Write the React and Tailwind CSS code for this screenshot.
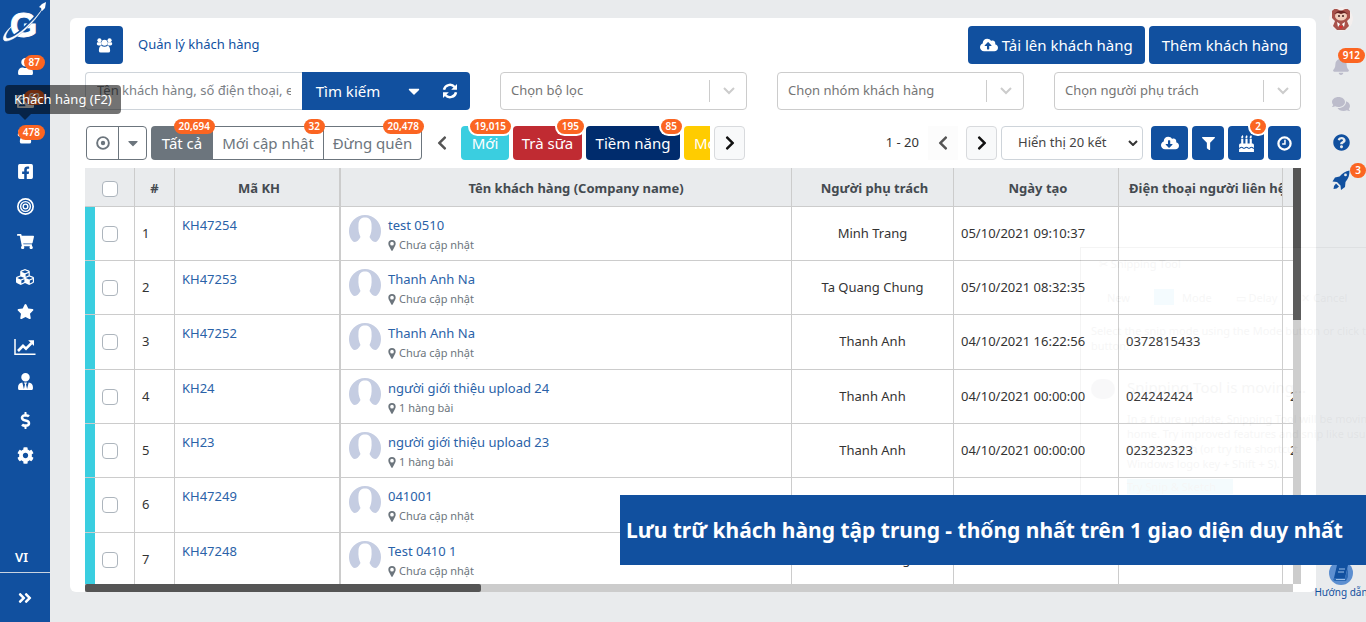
import {
  FaAngleDoubleRight,
  FaBell,
  FaBirthdayCake,
  FaCaretDown,
  FaChevronLeft,
  FaChevronRight,
  FaCloudDownloadAlt,
  FaCloudUploadAlt,
  FaCog,
  FaComments,
  FaCubes,
  FaDollarSign,
  FaFacebookSquare,
  FaFilter,
  FaIdCard,
  FaQuestionCircle,
  FaShoppingCart,
  FaStar,
  FaUser,
  FaUserTie,
} from "react-icons/fa";
import clsx from "clsx";

const customers = [
  { code: "KH47254", name: "test 0510", address: "Chưa cập nhật", owner: "Minh Trang", created: "05/10/2021 09:10:37", phone: "", extra: "" },
  { code: "KH47253", name: "Thanh Anh Na", address: "Chưa cập nhật", owner: "Ta Quang Chung", created: "05/10/2021 08:32:35", phone: "", extra: "" },
  { code: "KH47252", name: "Thanh Anh Na", address: "Chưa cập nhật", owner: "Thanh Anh", created: "04/10/2021 16:22:56", phone: "0372815433", extra: "" },
  { code: "KH24", name: "người giới thiệu upload 24", address: "1 hàng bài", owner: "Thanh Anh", created: "04/10/2021 00:00:00", phone: "024242424", extra: "24" },
  { code: "KH23", name: "người giới thiệu upload 23", address: "1 hàng bài", owner: "Thanh Anh", created: "04/10/2021 00:00:00", phone: "023232323", extra: "23" },
  { code: "KH47249", name: "041001", address: "Chưa cập nhật", owner: "Thanh Anh", created: "04/10/2021 00:00:00", phone: "", extra: "" },
  { code: "KH47248", name: "Test 0410 1", address: "Chưa cập nhật", owner: "Thu Phương", created: "04/10/2021 00:00:00", phone: "", extra: "" },
];

const menu = [
  { label: "Liên hệ", icon: FaUser, badge: "87" },
  { label: "Cơ hội", icon: FaIdCard, badge: "62" },
  { label: "Khách hàng", icon: UsersIcon, badge: "478" },
  { label: "Facebook", icon: FaFacebookSquare },
  { label: "Chiến dịch", icon: TargetIcon },
  { label: "Đơn hàng", icon: FaShoppingCart },
  { label: "Sản phẩm", icon: FaCubes, large: true },
  { label: "Đánh giá", icon: FaStar },
  { label: "Báo cáo", icon: LineChartIcon, large: true },
  { label: "Nhân sự", icon: FaUserTie },
];

const settingsMenu = [
  { label: "Tài chính", icon: FaDollarSign },
  { label: "Cài đặt", icon: FaCog },
];

function UsersIcon(props) {
  return (
    <svg viewBox="0 0 18 16" fill="currentColor" {...props}>
      <circle cx="3.600" cy="2.500" r="2.200" />
      <circle cx="14.400" cy="2.500" r="2.200" />
      <path d="M1.600 4.500H6L5.800 8H2.600Q0.800 8 0.800 6.500Q0.800 4.500 1.600 4.500Z" />
      <path d="M16.400 4.500H12L12.200 8H15.400Q17.200 8 17.200 6.500Q17.200 4.500 16.400 4.500Z" />
      <circle cx="9" cy="5" r="3.200" />
      <path d="M5.500 8.200Q9 10.200 12.500 8.200Q15 9 15 13.500Q15 15.500 13 15.500H5Q3 15.500 3 13.500Q3 9 5.500 8.200Z" />
    </svg>
  );
}

function TargetIcon(props) {
  return (
    <svg viewBox="0 0 16 16" fill="none" stroke="currentColor" {...props}>
      <circle cx="8" cy="8" r="7.2" strokeWidth="1.6" />
      <circle cx="8" cy="8" r="4.6" strokeWidth="1.3" />
      <circle cx="8" cy="8" r="2.2" strokeWidth="1.3" />
    </svg>
  );
}

function LineChartIcon(props) {
  return (
    <svg viewBox="0 0 22 17" fill="none" stroke="currentColor" {...props}>
      <path d="M1 0.5V15.7H21.5" strokeWidth="1.5" />
      <path d="M4 12.5L9 7.3L12 10.2L17.5 4.6" strokeWidth="2.6" />
      <path d="M14.2 1.8H20V7.6Z" fill="currentColor" stroke="none" />
    </svg>
  );
}

function RefreshIcon(props) {
  return (
    <svg viewBox="0 0 16 16" fill="none" stroke="currentColor" {...props}>
      <path d="M2 6.8A6.1 6.1 0 0 1 12.6 4" strokeWidth="2.5" />
      <path d="M14 9.2A6.1 6.1 0 0 1 3.4 12" strokeWidth="2.5" />
      <path d="M15 1V6.8H9.2Z" fill="currentColor" stroke="none" />
      <path d="M1 15V9.2H6.8Z" fill="currentColor" stroke="none" />
    </svg>
  );
}

function DotCircleIcon(props) {
  return (
    <svg viewBox="0 0 16 16" fill="none" stroke="currentColor" {...props}>
      <circle cx="8" cy="8" r="6.7" strokeWidth="2.2" />
      <circle cx="8" cy="8" r="2.5" fill="currentColor" stroke="none" />
    </svg>
  );
}

function ClockIcon(props) {
  return (
    <svg viewBox="0 0 16 16" fill="none" stroke="currentColor" {...props}>
      <circle cx="8" cy="8" r="6.5" strokeWidth="2.4" />
      <path d="M8.500 4V8.500H5.500" strokeWidth="1.6" />
    </svg>
  );
}

function MarkerIcon(props) {
  return (
    <svg viewBox="0 0 8 12" fill="currentColor" {...props}>
      <path
        fillRule="evenodd"
        d="M4 0A4 4 0 0 1 8 4C8 5.200 7.500 6 7 7L4.700 11.500Q4 12.300 3.300 11.500L1 7C0.500 6 0 5.200 0 4A4 4 0 0 1 4 0ZM4 2A2 2 0 1 0 4 6A2 2 0 1 0 4 2Z"
      />
    </svg>
  );
}

function RocketIcon(props) {
  return (
    <svg viewBox="0 0 18 20" fill="currentColor" {...props}>
      <path
        fillRule="evenodd"
        d="M17.500 0.500C17.500 5 16.500 8.500 13.500 12L13 17L9 20L8.500 15.500L5 12L0.500 11.500L3 7.500L7.500 6.500C10.500 3 13.500 1 17.500 0.500ZM13.500 3.500A1.400 1.400 0 1 0 13.500 6.300A1.400 1.400 0 1 0 13.500 3.500Z"
      />
      <path d="M4 13.500L7 16.500Q5 19 1.500 19Q1.500 15.500 4 13.500Z" />
    </svg>
  );
}

function Logo() {
  return (
    <svg viewBox="0 0 50 46" className="h-[46px] w-[50px]" aria-label="Logo">
      <text
        x="10"
        y="37"
        fontSize="35"
        fontWeight="700"
        fontFamily="Liberation Sans, sans-serif"
        fill="#fff"
        stroke="#fff"
        strokeWidth="1"
      >
        G
      </text>
      <path
        d="M9 38.500C17 36 31 24 42 9"
        fill="none"
        stroke="#11509f"
        strokeWidth="3.400"
      />
      <path
        d="M13 25C3 33 1 41 6 41C14 41 32 26 43 8C32 24 14 39 7.500 38.500C4 38 6 32 13 25Z"
        fill="#fff"
        stroke="#fff"
        strokeWidth="0.5"
      />
      <path d="M46 2L45 8L42 11L41 8L39 7L42 4Z" fill="#fff" />
    </svg>
  );
}

function Avatar() {
  return (
    <svg viewBox="0 0 32 32" className="h-8 w-8 shrink-0" aria-hidden="true">
      <path
        d="M16 0A16 16 0 0 1 32 16C32 21 30 25 27 27C24 27 22 25 20.500 22C22 19 23 15 22.500 9C22 4 19.500 2.500 16 2.500S10 4 9.500 9C9 15 10 19 11.500 22C10 25 8 27 5 27C2 25 0 21 0 16A16 16 0 0 1 16 0Z"
        fill="#c5cde2"
      />
    </svg>
  );
}

function ProfilePicture() {
  return (
    <svg viewBox="0 0 24 24" className="h-6 w-6 rounded-full" aria-hidden="true">
      <circle cx="12" cy="12" r="12" fill="#f4efee" />
      <path d="M3 2L8 2L12 4L16 2L21 2L21 11L18 14L20 19L16 23H8L4 19L6 14L3 11Z" fill="#a8524b" />
      <ellipse cx="12" cy="9" rx="6" ry="4.500" fill="#f1cdbb" />
      <path d="M5 7Q12 0 19 7L15 6L12 7L9 6Z" fill="#6b2422" />
      <circle cx="10" cy="9" r="1" fill="#3c1c1c" />
      <circle cx="14" cy="9" r="1" fill="#3c1c1c" />
      <path d="M8 15L11 17L9 20ZM16 15L13 17L15 20Z" fill="#fff" />
      <path d="M10 19L12 22L14 19Z" fill="#e02a2a" />
    </svg>
  );
}

function Badge({ className, children }) {
  return (
    <span
      className={clsx(
        "absolute z-10 rounded-full bg-[#fb6522] px-[5px] text-center text-[10px] leading-[15px] font-semibold text-white",
        className
      )}
    >
      {children}
    </span>
  );
}

function MenuItem({ label, icon: Icon, badge, large }) {
  return (
    <a
      href="#menu"
      aria-label={label}
      className="relative flex h-[35px] items-center justify-center"
    >
      <Icon className={large ? "h-[18px] w-[22px]" : "h-[17px] w-[17px]"} />
      {badge && <Badge className="top-[6px] right-[5px]">{badge}</Badge>}
    </a>
  );
}

function Sidebar() {
  return (
    <nav className="flex w-[50px] shrink-0 flex-col bg-[#11509f] text-white">
      <a href="#home" className="block h-[49px]">
        <Logo />
      </a>
      {menu.map((item) => (
        <MenuItem key={item.label} {...item} />
      ))}
      <div className="mt-1">
        {settingsMenu.map((item) => (
          <MenuItem key={item.label} {...item} />
        ))}
      </div>
      <div className="mt-auto border-b border-[#c9d3e0] pb-[6px] pl-[15px] text-[13px] leading-[18px] font-semibold">
        VI
      </div>
      <button aria-label="Mở rộng" className="flex h-[49px] items-center justify-center">
        <FaAngleDoubleRight className="h-4 w-4" />
      </button>
    </nav>
  );
}

function MenuTooltip() {
  return (
    <div
      role="tooltip"
      className="absolute top-[85px] left-[5px] z-20 rounded bg-black/55 px-[9px] text-[13px] leading-[29px] whitespace-nowrap text-white"
    >
      Khách hàng (F2)
      <span className="absolute top-full left-[14px] border-x-6 border-t-6 border-x-transparent border-t-black/55" />
    </div>
  );
}

function FilterSelect({ label }) {
  return (
    <div className="relative">
      <select
        aria-label={label}
        className="h-[38px] w-full appearance-none rounded border border-[#ccc] bg-white pl-[10px] text-[13px] text-[#757575]"
      >
        <option>{label}</option>
      </select>
      <span className="pointer-events-none absolute inset-y-2 right-0 flex w-[38px] items-center justify-center border-l border-[#ccc]">
        <svg viewBox="0 0 12 8" className="h-2 w-3" fill="none" stroke="#ccc" strokeWidth="2">
          <path d="M1 1L6 6L11 1" />
        </svg>
      </span>
    </div>
  );
}

function SearchRow() {
  return (
    <div className="mt-2 grid grid-cols-[385fr_247fr_247fr_247fr] gap-[30px]">
      <div className="flex h-[38px]">
        <input
          type="text"
          aria-label="Tìm khách hàng"
          placeholder="Tên khách hàng, số điện thoại, email"
          className="min-w-0 flex-1 rounded-l border border-r-0 border-[#ced4da] px-[11px] text-[13px] placeholder:text-[#7b8086]"
        />
        <button className="w-[92px] bg-[#11509f] text-[15px] text-white">Tìm kiếm</button>
        <button
          aria-label="Tùy chọn tìm kiếm"
          className="flex w-10 items-center justify-center bg-[#11509f] text-white"
        >
          <FaCaretDown className="h-[18px] w-[18px]" />
        </button>
        <button
          aria-label="Tải lại"
          className="flex w-9 items-center justify-center rounded-r bg-[#11509f] pr-1 text-white"
        >
          <RefreshIcon className="h-4 w-4" />
        </button>
      </div>
      <FilterSelect label="Chọn bộ lọc" />
      <FilterSelect label="Chọn nhóm khách hàng" />
      <FilterSelect label="Chọn người phụ trách" />
    </div>
  );
}

function Toolbar() {
  return (
    <div className="mt-4 flex h-[34px] items-stretch justify-between pl-px text-[15px]">
      <div className="flex">
        <div className="flex divide-x divide-[#6c757d] rounded border border-[#6c757d] text-[#6c757d]">
          <button aria-label="Trạng thái" className="flex w-8 items-center justify-center">
            <DotCircleIcon className="h-[14px] w-[14px]" />
          </button>
          <button aria-label="Mở danh sách" className="flex w-[27px] items-center justify-center">
            <FaCaretDown className="h-4 w-4" />
          </button>
        </div>
        <div className="ml-1 flex text-[#6c757d]">
          <button className="relative w-[62px] rounded-l bg-[#6c757d] text-white">
            Tất cả
            <Badge className="-top-[7px] -right-[2px]">20,694</Badge>
          </button>
          <button className="relative w-[111px] border-y border-r border-[#6c757d]">
            Mới cập nhật
            <Badge className="-top-[8px] -right-[2px]">32</Badge>
          </button>
          <button className="relative w-[98px] rounded-r border border-l-0 border-[#6c757d]">
            Đừng quên
            <Badge className="-top-[8px] -right-[3px]">20,478</Badge>
          </button>
        </div>
        <button aria-label="Nhóm trước" className="mx-1 flex w-[31px] items-center justify-center text-[#555]">
          <FaChevronLeft className="h-4 w-4" />
        </button>
        <div className="flex gap-1 text-white">
          <button className="relative w-12 rounded bg-[#3acee0]">
            Mới
            <Badge className="-top-[7px] -right-[2px] ring-2 ring-white">19,015</Badge>
          </button>
          <button className="relative w-[69px] rounded bg-[#c02b32]">
            Trà sữa
            <Badge className="-top-[7px] -right-[2px] ring-2 ring-white">195</Badge>
          </button>
          <button className="relative w-[94px] rounded bg-[#002c6d]">
            Tiềm năng
            <Badge className="-top-[7px] -right-[2px] ring-2 ring-white">85</Badge>
          </button>
          <button className="w-[26px] overflow-hidden rounded-l bg-[#ffcc00] pl-[10px] text-left whitespace-nowrap">
            Mới gọi
          </button>
        </div>
        <button
          aria-label="Nhóm sau"
          className="ml-1 flex w-[31px] items-center justify-center rounded border border-[#d8dadd] bg-[#f8f9fa] text-[#111]"
        >
          <FaChevronRight className="h-4 w-4" />
        </button>
      </div>
      <div className="flex gap-1">
        <span className="self-center text-[13px]">1 - 20</span>
        <button aria-label="Trang trước" disabled className="ml-[5px] flex w-[30px] items-center justify-center bg-[#fcfcfc] text-[#555]">
          <FaChevronLeft className="h-4 w-4" />
        </button>
        <button
          aria-label="Trang sau"
          className="ml-1 flex w-[31px] items-center justify-center rounded border border-[#d8dadd] bg-[#f8f9fa] text-[#111]"
        >
          <FaChevronRight className="h-4 w-4" />
        </button>
        <div className="relative mr-1">
          <select
            aria-label="Số dòng hiển thị"
            className="h-full w-[142px] appearance-none rounded border border-[#ced4da] bg-white pl-4 text-[13px] text-[#444]"
          >
            <option>Hiển thị 20 kết</option>
          </select>
          <svg
            viewBox="0 0 10 6"
            className="pointer-events-none absolute top-[14px] right-[5px] h-[6px] w-[10px]"
            fill="none"
            stroke="#333"
            strokeWidth="2"
          >
            <path d="M1 1L5 5L9 1" />
          </svg>
        </div>
        <button aria-label="Xuất dữ liệu" className="flex w-[37px] items-center justify-center rounded bg-[#11509f] text-white">
          <FaCloudDownloadAlt className="h-[18px] w-[18px]" />
        </button>
        <button aria-label="Bộ lọc" className="flex w-8 items-center justify-center rounded bg-[#11509f] text-white">
          <FaFilter className="h-[13px] w-[13px]" />
        </button>
        <button aria-label="Sinh nhật" className="relative flex w-9 items-center justify-center rounded bg-[#11509f] text-white">
          <FaBirthdayCake className="h-[17px] w-[17px]" />
          <Badge className="-top-[7px] -right-[2px] ring-2 ring-white">2</Badge>
        </button>
        <button aria-label="Lịch sử" className="flex w-[33px] items-center justify-center rounded bg-[#11509f] text-white">
          <ClockIcon className="h-[15px] w-[15px]" />
        </button>
      </div>
    </div>
  );
}

function Checkbox({ label }) {
  return (
    <input
      type="checkbox"
      aria-label={label}
      className="block h-4 w-4 appearance-none rounded-[4px] border border-[#adb5bd] bg-white"
    />
  );
}

function CustomersTable() {
  return (
    <div className="mt-2 flex min-h-0 flex-1 flex-col">
      <div className="flex min-h-0 flex-1">
        <div className="min-w-0 flex-1 overflow-hidden">
          <table className="w-[1380px] table-fixed border-separate border-spacing-0 text-[13px] text-[#333] [&_td]:border-r [&_td]:border-b [&_td]:border-[#ccc] [&_th]:border-r [&_th]:border-b [&_th]:border-[#ccc] [&_th]:pt-1">
            <colgroup>
              <col className="w-[10px]" />
              <col className="w-10" />
              <col className="w-10" />
              <col className="w-[166px]" />
              <col className="w-[451px]" />
              <col className="w-[162px]" />
              <col className="w-[165px]" />
              <col className="w-[164px]" />
              <col />
            </colgroup>
            <thead className="h-[39px] bg-[#e9ebed] text-[#444a50]">
              <tr>
                <th colSpan={2} className="pl-[17px]">
                  <Checkbox label="Chọn tất cả" />
                </th>
                <th>#</th>
                <th className="!border-r-2 pl-1">Mã KH</th>
                <th className="pl-5">Tên khách hàng (Company name)</th>
                <th className="pl-1">Người phụ trách</th>
                <th className="pl-1">Ngày tạo</th>
                <th className="overflow-hidden pl-[10px] text-left whitespace-nowrap">
                  Điện thoại người liên hệ
                </th>
                <th />
              </tr>
            </thead>
            <tbody className="[&>tr]:h-[54px] [&>tr:nth-child(3n)]:h-[55px]">
              {customers.map((customer, index) => (
                <tr key={customer.code}>
                  <td className="!border-r-0 bg-[#3acee0]" />
                  <td className="pl-[7px]">
                    <Checkbox label={`Chọn ${customer.code}`} />
                  </td>
                  <td className="pl-[7px]">{index + 1}</td>
                  <td className="!border-r-2 px-[7px] pt-2 align-top leading-5">
                    <a href="#customer" className="text-[#2a62a8]">
                      {customer.code}
                    </a>
                  </td>
                  <td className="px-2 pt-2 align-top">
                    <div className="flex gap-[7px]">
                      <Avatar />
                      <div>
                        <a href="#customer" className="block leading-5 text-[#2a62a8]">
                          {customer.name}
                        </a>
                        <div className="flex items-center gap-[3px] text-[11px] leading-5 text-[#6c757d]">
                          <MarkerIcon className="h-[11px] w-2" />
                          {customer.address}
                        </div>
                      </div>
                    </div>
                  </td>
                  <td className="text-center">{customer.owner}</td>
                  <td className="px-[7px] whitespace-nowrap">{customer.created}</td>
                  <td className="px-[7px]">{customer.phone}</td>
                  <td className="px-[7px]">{customer.extra}</td>
                </tr>
              ))}
            </tbody>
          </table>
        </div>
        <div className="w-2 shrink-0 bg-[#ccc]">
          <div className="h-[152px] bg-[#555]" />
        </div>
      </div>
      <div className="mr-2 h-2 shrink-0 bg-[#ccc]">
        <div className="h-2 w-[396px] rounded-xs bg-[#555]" />
      </div>
    </div>
  );
}

function RightBar() {
  return (
    <aside className="flex w-[50px] shrink-0 flex-col items-center text-[#11509f]">
      <a href="#profile" aria-label="Tài khoản" className="mt-[7px]">
        <ProfilePicture />
      </a>
      <button aria-label="Thông báo" className="relative mt-[17px] flex h-9 w-full items-center justify-center text-[#bcbccb]">
        <FaBell className="h-[18px] w-[18px]" />
        <Badge className="top-0 right-[1px]">912</Badge>
      </button>
      <button aria-label="Tin nhắn" className="flex h-10 w-full items-center justify-center text-[#bcbccb]">
        <FaComments className="h-[18px] w-[18px]" />
      </button>
      <button aria-label="Trợ giúp" className="flex h-9 w-full items-center justify-center">
        <FaQuestionCircle className="h-[17px] w-[17px]" />
      </button>
      <button aria-label="Tính năng mới" className="relative flex h-10 w-full items-center justify-center">
        <RocketIcon className="h-5 w-[18px]" />
        <Badge className="top-[3px] right-0">3</Badge>
      </button>
      <a href="#guide" className="mt-auto mb-[22px] flex flex-col items-center text-[10px] leading-[15px] whitespace-nowrap">
        <svg viewBox="0 0 24 24" className="h-6 w-6" aria-hidden="true">
          <circle cx="12" cy="12" r="12" fill="#5d8fd0" />
          <path d="M8 4H19L16 17H5Z" fill="#11509f" />
          <path d="M5 17L16 17L19 7V16L17 20H6Q3 19 5 17Z" fill="#2c69b4" />
          <path d="M10 8H16M9 11H15M7 18.500H16" stroke="#9dbfe8" strokeWidth="1" />
        </svg>
        Hướng dẫn
      </a>
    </aside>
  );
}

// capture window fading out over the page
function FadingWindow() {
  return (
    <div
      aria-hidden="true"
      className="pointer-events-none absolute top-[247px] right-0 z-10 h-[248px] w-[286px] overflow-hidden border-t border-l border-black bg-white pl-[10px] text-[11px] leading-[15px] whitespace-nowrap opacity-[0.04]"
    >
      <div className="py-2 pl-2">✂ Snipping Tool</div>
      <div className="flex h-9 items-center gap-6 pl-4">
        <span>New</span>
        <span className="flex items-center gap-2">
          <span className="h-4 w-5 bg-sky-500" />
          Mode
        </span>
        <span>▭ Delay</span>
        <span>✕ Cancel</span>
      </div>
      <p className="mt-2">Select the snip mode using the Mode button or click the New</p>
      <p>button.</p>
      <div className="mt-[18px] flex gap-3">
        <span className="mt-2 h-5 w-6 shrink-0 rounded-full bg-gray-500" />
        <div>
          <div className="text-[15px] leading-8">Snipping Tool is moving...</div>
          <p className="mt-2">In a future update, Snipping Tool will be moving to a new</p>
          <p>home. Try improved features and snip like usual with</p>
          <p>Snip &amp; Sketch (or try the shortcut</p>
          <p>Windows logo key + Shift + S).</p>
          <div className="mt-2 w-[106px] bg-cyan-500">Try Snip &amp; Sketch</div>
        </div>
      </div>
    </div>
  );
}

export default function App() {
  return (
    <div className="relative flex h-screen overflow-hidden bg-[#e9ebed] font-['Noto_Sans','Open_Sans',sans-serif] text-[#333]">
      <Sidebar />
      <main className="mt-[18px] mb-[30px] ml-5 flex min-w-0 flex-1 flex-col rounded-md bg-white px-[15px] pt-2">
        <header className="flex h-[38px] items-stretch">
          <span className="flex w-[38px] items-center justify-center rounded bg-[#11509f] text-white">
            <UsersIcon className="h-[15px] w-[17px]" />
          </span>
          <h1 className="ml-[15px] self-center text-[13px] text-[#11509f]">Quản lý khách hàng</h1>
          <div className="ml-auto flex gap-1 text-[15px] text-white">
            <button className="flex items-center gap-1 rounded bg-[#11509f] px-3">
              <FaCloudUploadAlt className="h-[18px] w-[18px]" />
              Tải lên khách hàng
            </button>
            <button className="rounded bg-[#11509f] px-[13px]">Thêm khách hàng</button>
          </div>
        </header>
        <SearchRow />
        <Toolbar />
        <CustomersTable />
      </main>
      <RightBar />
      <MenuTooltip />
      <FadingWindow />
      <div className="absolute right-0 bottom-[57px] z-20 w-[746px] bg-[#11509f] pl-[6px] text-[21px] leading-[70px] font-bold whitespace-nowrap text-white">
        Lưu trữ khách hàng tập trung - thống nhất trên 1 giao diện duy nhất
      </div>
    </div>
  );
}
